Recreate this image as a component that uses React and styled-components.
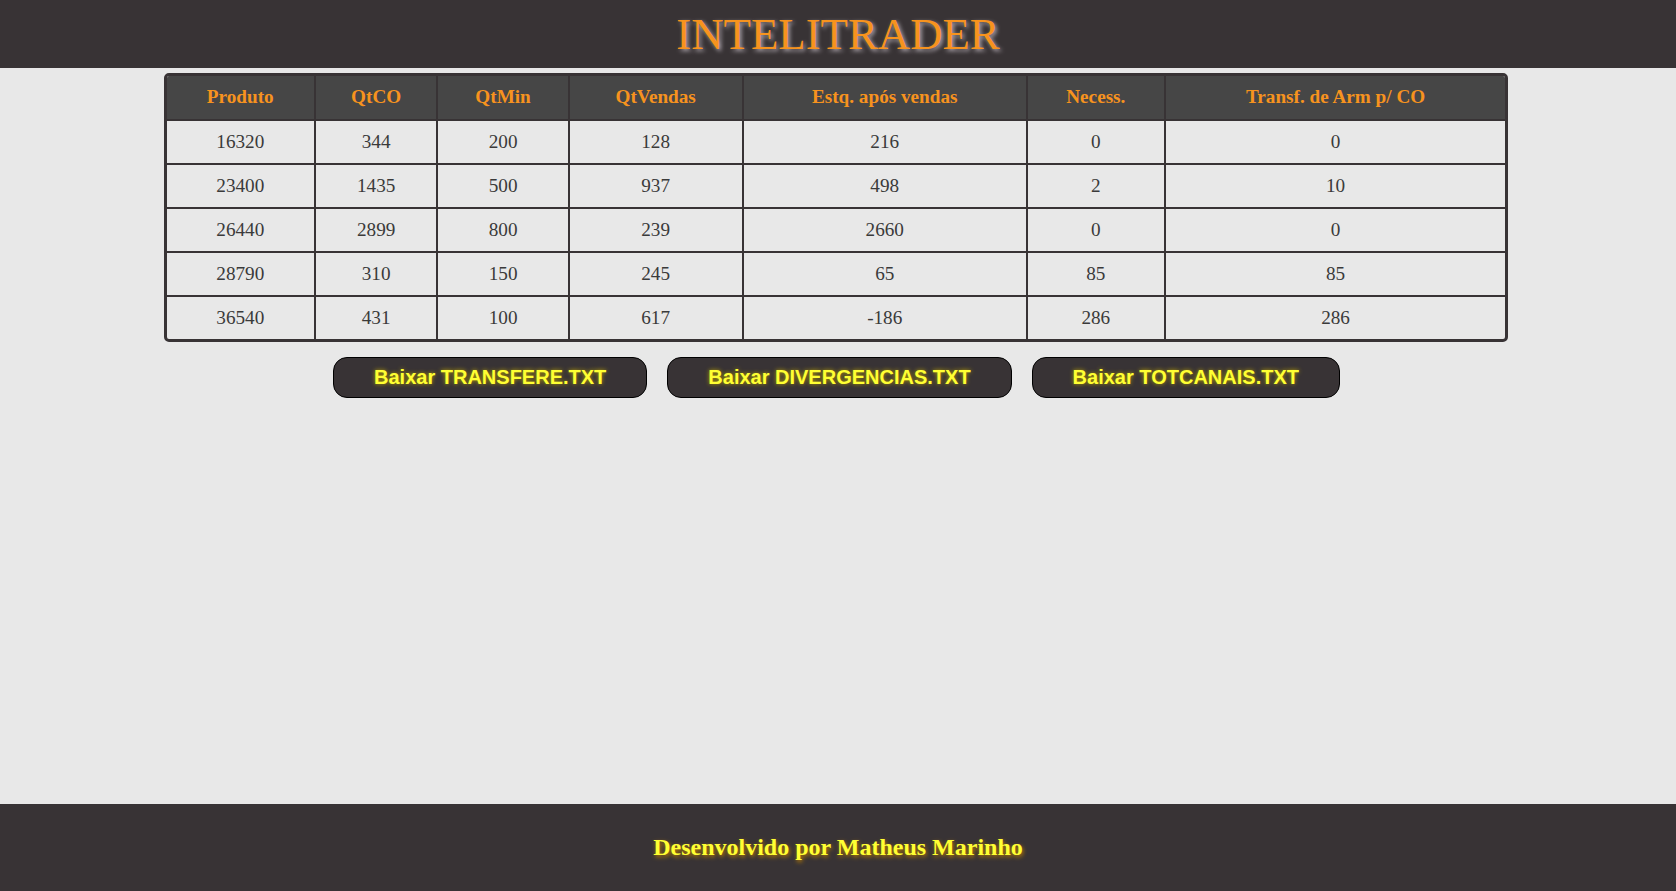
import React from 'react'
import styled, { createGlobalStyle } from 'styled-components'

const rows = [
  [16320, 344, 200, 128, 216, 0, 0],
  [23400, 1435, 500, 937, 498, 2, 10],
  [26440, 2899, 800, 239, 2660, 0, 0],
  [28790, 310, 150, 245, 65, 85, 85],
  [36540, 431, 100, 617, -186, 286, 286],
]

const headings = ['Produto', 'QtCO', 'QtMin', 'QtVendas', 'Estq. após vendas', 'Necess.', 'Transf. de Arm p/ CO']

const files = ['TRANSFERE.TXT', 'DIVERGENCIAS.TXT', 'TOTCANAIS.TXT']

function App() {
  return (
    <>
      <GlobalStyle />
      <Page>
        <Header>
          <Title>INTELITRADER</Title>
        </Header>
        <Main>
          <Table>
            <thead>
              <tr>
                {headings.map(h => <Th key={h}>{h}</Th>)}
              </tr>
            </thead>
            <tbody>
              {rows.map(r => (
                <tr key={r[0]}>
                  {r.map((v, i) => <Td key={i}>{v}</Td>)}
                </tr>
              ))}
            </tbody>
          </Table>
          <Buttons>
            {files.map(f => <DownloadButton key={f}>Baixar {f}</DownloadButton>)}
          </Buttons>
        </Main>
        <Footer>
          <Credit>Desenvolvido por Matheus Marinho</Credit>
        </Footer>
      </Page>
    </>
  )
}

export default App

const GlobalStyle = createGlobalStyle`
  body {
    margin: 0;
    background-color: #e8e8e8;
    font-family: "Liberation Serif", "Times New Roman", serif;
  }
`

const Page = styled.div`
  display: flex;
  flex-direction: column;
  min-height: 100vh;
`

const Header = styled.header`
  background-color: #383335;
  height: 68px;
  display: flex;
  align-items: center;
  justify-content: center;
`

const Title = styled.h1`
  margin: 0;
  font-weight: normal;
  font-size: 44.8px;
  color: #f7931e;
  text-shadow: 2px 2px 4px #b0a8b0;
`

const Main = styled.main`
  padding-top: 5px;
`

const Table = styled.table`
  width: calc(80% + 4px);
  margin: 0 auto 0 calc(10% - 4px);
  border-collapse: separate;
  border-spacing: 0;
  border: 3px solid #383335;
  border-radius: 5px;
  overflow: hidden;
`

const Th = styled.th`
  background-color: #464646;
  color: #f7931e;
  font-size: 19.2px;
  font-weight: bold;
  padding: 10px 10px 11px;
  height: 21px;
  border-left: 2px solid #383335;
  border-bottom: 2px solid #383335;

  &:first-child {
    border-left: none;
  }
`

const Td = styled.td`
  color: #3a3a3a;
  font-size: 19.2px;
  text-align: center;
  padding: 10px 10px;
  border-left: 2px solid #383335;
  border-bottom: 2px solid #383335;

  &:first-child {
    border-left: none;
  }

  tr:last-child > & {
    border-bottom: none;
  }
`

const Buttons = styled.div`
  display: flex;
  justify-content: center;
  gap: 20px;
  margin-top: 15px;
  margin-right: 3px;
`

const DownloadButton = styled.button`
  background-color: #383335;
  border: 1px solid #000;
  border-radius: 14px;
  padding: 8px 40px;
  font-family: "Liberation Sans", Arial, sans-serif;
  font-weight: bold;
  font-size: 20px;
  color: #ffff33;
  text-shadow: 0 0 4px #b8a000;
  cursor: pointer;
`

const Footer = styled.footer`
  margin-top: auto;
  background-color: #383335;
  height: 87px;
  display: flex;
  align-items: center;
  justify-content: center;
`

const Credit = styled.h3`
  margin: 0;
  font-size: 24px;
  font-weight: bold;
  color: #ffff33;
  text-shadow: 1px 2px 4px #c08000;
`
